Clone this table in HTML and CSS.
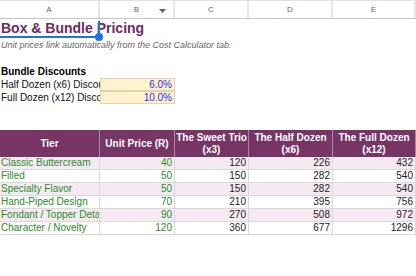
FILE: index.html
```html
<!DOCTYPE html>
<html>
<head>
<meta charset="utf-8">
<link rel="stylesheet" href="styles.css">
</head>
<body>
<div class="sheet">
  <div class="grid colheads">
    <div class="ch">A</div>
    <div class="ch ch-b">B<svg class="dd" width="7" height="4" viewBox="0 0 7 4"><path d="M0 0H7L3.5 4Z" fill="#5f6368"/></svg></div>
    <div class="ch">C</div>
    <div class="ch">D</div>
    <div class="ch">E</div>
  </div>

  <div class="grid r-title">
    <div class="title">Box &amp; Bundle Pricing</div>
    <div class="sel"></div>
  </div>
  <div class="grid r-sub"><div class="sub">Unit prices link automatically from the Cost Calculator tab.</div></div>
  <div class="grid r13"></div>
  <div class="grid r13"><div class="bold span">Bundle Discounts</div></div>
  <div class="grid r13">
    <div class="lbl">Half Dozen (x6) Discount</div>
    <div class="inp">6.0%</div>
  </div>
  <div class="grid r13">
    <div class="lbl">Full Dozen (x12) Discount</div>
    <div class="inp">10.0%</div>
  </div>
  <div class="grid r13"></div>
  <div class="grid r13"></div>

  <div class="grid thead">
    <div class="th">Tier</div>
    <div class="th">Unit Price (R)</div>
    <div class="th">The Sweet Trio<br>(x3)</div>
    <div class="th">The Half Dozen<br>(x6)</div>
    <div class="th">The Full Dozen<br>(x12)</div>
  </div>

  <div class="grid tr alt">
    <div class="tc name">Classic Buttercream</div><div class="tc num green">40</div><div class="tc num">120</div><div class="tc num">226</div><div class="tc num">432</div>
  </div>
  <div class="grid tr">
    <div class="tc name">Filled</div><div class="tc num green">50</div><div class="tc num">150</div><div class="tc num">282</div><div class="tc num">540</div>
  </div>
  <div class="grid tr alt">
    <div class="tc name">Specialty Flavor</div><div class="tc num green">50</div><div class="tc num">150</div><div class="tc num">282</div><div class="tc num">540</div>
  </div>
  <div class="grid tr">
    <div class="tc name">Hand-Piped Design</div><div class="tc num green">70</div><div class="tc num">210</div><div class="tc num">395</div><div class="tc num">756</div>
  </div>
  <div class="grid tr alt">
    <div class="tc name">Fondant / Topper Details</div><div class="tc num green">90</div><div class="tc num">270</div><div class="tc num">508</div><div class="tc num">972</div>
  </div>
  <div class="grid tr">
    <div class="tc name">Character / Novelty</div><div class="tc num green">120</div><div class="tc num">360</div><div class="tc num">677</div><div class="tc num">1296</div>
  </div>
</div>
</body>
</html>
```

FILE: styles.css
```css
* { box-sizing: border-box; }

body {
  margin: 0;
  background: #ffffff;
  font-family: "Liberation Sans", Arial, sans-serif;
  font-size: 10px;
  color: #222222;
}

.sheet { width: 416px; }

.grid {
  display: grid;
  grid-template-columns: 100px 75px 74px 84px 83px;
}

/* column letters */
.colheads {
  height: 19px;
  border-top: 1px solid #e3e3e3;
  border-bottom: 1px solid #c6c6c6;
}
.ch {
  display: flex;
  align-items: center;
  justify-content: center;
  font-size: 8px;
  color: #666666;
  border-right: 2px solid #e6e6e6;
  position: relative;
}
.dd {
  position: absolute;
  right: 7px;
  top: 8px;
}

/* title */
.r-title { height: 19px; }
.title {
  grid-column: 1 / -1;
  grid-row: 1;
  font-size: 14px;
  font-weight: bold;
  color: #6d2b5e;
  line-height: 19px;
  white-space: nowrap;
  padding-left: 1px;
}
.sel {
  grid-column: 1;
  grid-row: 1;
  margin-top: 2px;
  border-right: 2px solid #1a73e8;
  border-bottom: 2px solid #1a73e8;
  position: relative;
}
.sel::after {
  content: "";
  position: absolute;
  right: -5px;
  bottom: -5px;
  width: 8px;
  height: 8px;
  border-radius: 50%;
  background: #1a73e8;
}

.r-sub { height: 14px; }
.sub {
  grid-column: 1 / -1;
  font-size: 9px;
  font-style: italic;
  color: #666666;
  line-height: 14px;
  white-space: nowrap;
  padding-left: 1px;
}

.r13 { height: 13px; line-height: 13px; }
.span { grid-column: 1 / -1; white-space: nowrap; }
.bold { font-weight: bold; color: #000000; padding-left: 1px; }

.lbl {
  white-space: nowrap;
  overflow: hidden;
  color: #111111;
  padding-left: 1px;
}
.inp {
  background: #fff2cc;
  border: 1px solid #ddd4b6;
  color: #2f2ff0;
  text-align: right;
  padding-right: 2px;
  line-height: 11px;
  font-size: 10px;
}

/* table */
.thead { height: 27px; }
.th {
  background: #773566;
  color: #ffffff;
  font-weight: bold;
  text-align: center;
  line-height: 12px;
  display: flex;
  align-items: center;
  justify-content: center;
  border-right: 1px solid #a98b9f;
  white-space: nowrap;
}

.tr { height: 13px; }
.alt { background: #f5eaf2; }
.tc {
  border-right: 1px solid #d9d9d9;
  border-bottom: 1px solid #d9d9d9;
  line-height: 12px;
  padding: 0 2px 0 1px;
  white-space: nowrap;
  overflow: hidden;
}
.name { color: #2a8c2a; }
.num { text-align: right; }
.green { color: #2a8c2a; }
```
